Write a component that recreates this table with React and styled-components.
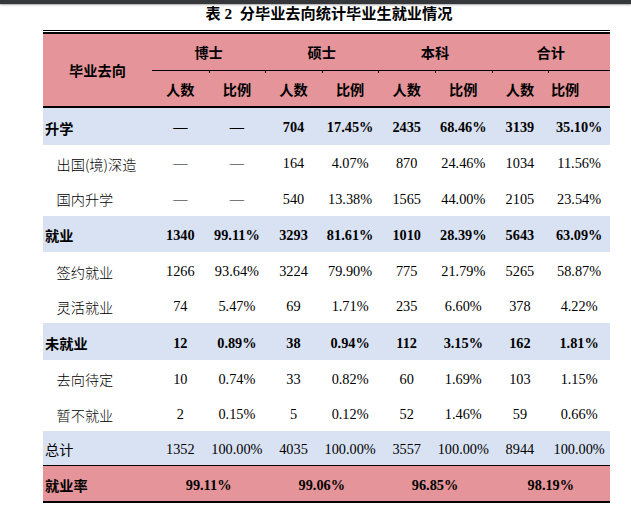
import React from "react";
import styled, { createGlobalStyle } from "styled-components";

const Global = createGlobalStyle`
  html, body { margin: 0; padding: 0; background: #fff; }
  body { font-family: "Liberation Serif", "Noto Sans CJK SC", serif; color: #000; }
`;

const PINK = "#e5959a";
const BLUE = "#d9e2f3";

const TopBar = styled.div`
  height: 4px;
  background: #35373a;
  box-shadow: 0 1px 2px rgba(0, 0, 0, 0.35);
`;

const Title = styled.h1`
  margin: 0 0 6px 43px;
  width: 567px;
  padding-left: 5px;
  box-sizing: border-box;
  height: 20px;
  line-height: 20px;
  font-size: 15.2px;
  font-weight: 700;
  text-align: center;
  white-space: pre;
`;

const Frame = styled.div`
  margin-left: 43px;
  width: 567px;
  border-top: 1px solid #000;
  padding-top: 1px;
`;

const Table = styled.table`
  width: 567px;
  table-layout: fixed;
  border-collapse: separate;
  border-spacing: 0;
  border-top: 2px solid #000;
  font-size: 14.3px;
`;

const HeadRow = styled.tr`
  height: ${(p) => p.$h}px;
`;

const HeadCell = styled.th`
  position: relative;
  padding: 0 ${(p) => p.$padRight || 0}px 0 0;
  background: ${PINK};
  font-family: "Noto Sans CJK SC", sans-serif;
  font-size: 14.2px;
  font-weight: 700;
  text-align: center;
  vertical-align: middle;
  border-bottom: ${(p) => p.$rule || "none"};
`;

const Tick = styled.span`
  position: absolute;
  left: 0;
  top: 0;
  width: 1px;
  height: 2px;
  background: #000;
`;

const kinds = {
  group: { bg: BLUE, weight: 700, h: 36.8, border: "none" },
  item: { bg: "#fff", weight: 400, h: 35.4, border: "none" },
  total: { bg: BLUE, weight: 400, h: 35, border: "1px solid #000" },
  rate: { bg: PINK, weight: 700, h: 37.7, border: "2px solid #000" },
};

const Row = styled.tr`
  height: ${(p) => kinds[p.$kind].h}px;
`;

const LabelCell = styled.td`
  padding: 3px 0 0 ${(p) => (p.$kind === "item" ? 13.5 : 2)}px;
  background: ${(p) => kinds[p.$kind].bg};
  border-bottom: ${(p) => kinds[p.$kind].border};
  font-family: "Noto Sans CJK SC", sans-serif;
  font-size: 14.2px;
  font-weight: ${(p) => (p.$kind === "item" ? 300 : kinds[p.$kind].weight)};
  text-align: left;
  vertical-align: middle;
  white-space: nowrap;
`;

const NumCell = styled.td`
  padding: 3px 0 0;
  background: ${(p) => kinds[p.$kind].bg};
  border-bottom: ${(p) => kinds[p.$kind].border};
  font-family: "Liberation Serif", "Noto Sans CJK SC", serif;
  font-weight: ${(p) => kinds[p.$kind].weight};
  text-align: center;
  vertical-align: middle;
  white-space: nowrap;
`;

const cols = [109, 56.6, 56.6, 56.6, 56.6, 56.6, 56.6, 56.6, 61.8];
const groups = ["博士", "硕士", "本科", "合计"];

const rows = [
  { label: "升学", kind: "group", vals: ["—", "—", "704", "17.45%", "2435", "68.46%", "3139", "35.10%"] },
  { label: "出国(境)深造", kind: "item", vals: ["—", "—", "164", "4.07%", "870", "24.46%", "1034", "11.56%"] },
  { label: "国内升学", kind: "item", vals: ["—", "—", "540", "13.38%", "1565", "44.00%", "2105", "23.54%"] },
  { label: "就业", kind: "group", vals: ["1340", "99.11%", "3293", "81.61%", "1010", "28.39%", "5643", "63.09%"] },
  { label: "签约就业", kind: "item", vals: ["1266", "93.64%", "3224", "79.90%", "775", "21.79%", "5265", "58.87%"] },
  { label: "灵活就业", kind: "item", vals: ["74", "5.47%", "69", "1.71%", "235", "6.60%", "378", "4.22%"] },
  { label: "未就业", kind: "group", vals: ["12", "0.89%", "38", "0.94%", "112", "3.15%", "162", "1.81%"] },
  { label: "去向待定", kind: "item", vals: ["10", "0.74%", "33", "0.82%", "60", "1.69%", "103", "1.15%"] },
  { label: "暂不就业", kind: "item", vals: ["2", "0.15%", "5", "0.12%", "52", "1.46%", "59", "0.66%"] },
  { label: "总计", kind: "total", vals: ["1352", "100.00%", "4035", "100.00%", "3557", "100.00%", "8944", "100.00%"] },
];

const rates = ["99.11%", "99.06%", "96.85%", "98.19%"];

export default function App() {
  return (
    <>
      <Global />
      <TopBar />
      <Title>{"表 2  分毕业去向统计毕业生就业情况"}</Title>
      <Frame>
        <Table>
          <colgroup>
            {cols.map((w, i) => (
              <col key={i} style={{ width: w }} />
            ))}
          </colgroup>
          <thead>
            <HeadRow $h={37}>
              <HeadCell rowSpan={2} $rule="2px solid #000">毕业去向</HeadCell>
              {groups.map((g) => (
                <HeadCell key={g} colSpan={2} $rule="1px solid #000">
                  {g}
                </HeadCell>
              ))}
            </HeadRow>
            <HeadRow $h={37}>
              {groups.flatMap((g, gi) => [
                <HeadCell key={g + "n"} $rule="2px solid #000">
                  {gi > 0 && <Tick />}
                  人数
                </HeadCell>,
                <HeadCell key={g + "r"} $rule="2px solid #000" $padRight={gi === 3 ? 28 : 0}>
                  <Tick />
                  比例
                </HeadCell>,
              ])}
            </HeadRow>
          </thead>
          <tbody>
            {rows.map((r) => (
              <Row key={r.label} $kind={r.kind}>
                <LabelCell $kind={r.kind}>{r.label}</LabelCell>
                {r.vals.map((v, i) => (
                  <NumCell key={i} $kind={r.kind}>
                    {v}
                  </NumCell>
                ))}
              </Row>
            ))}
            <Row $kind="rate">
              <LabelCell $kind="rate">就业率</LabelCell>
              {rates.map((v, i) => (
                <NumCell key={i} colSpan={2} $kind="rate">
                  {v}
                </NumCell>
              ))}
            </Row>
          </tbody>
        </Table>
      </Frame>
    </>
  );
}
